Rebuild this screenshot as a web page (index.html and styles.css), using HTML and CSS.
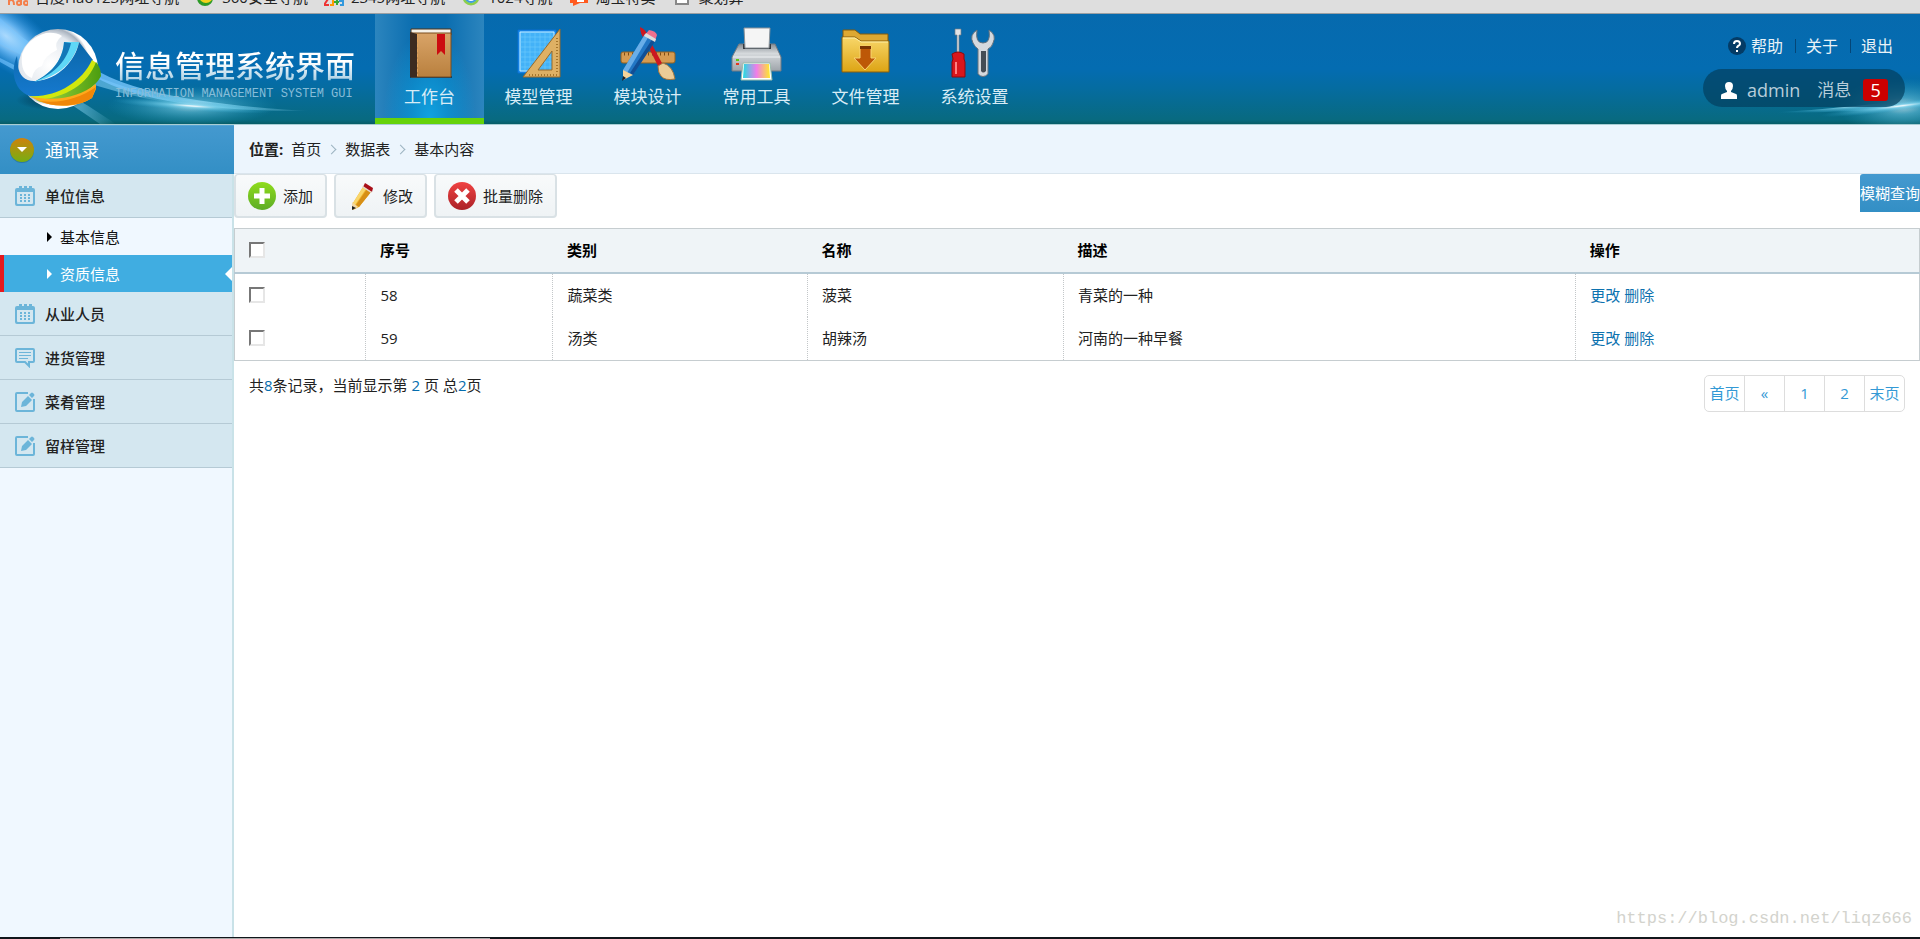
FILE: index.html
```html
<!DOCTYPE html>
<html lang="zh-CN">
<head>
    <meta charset="UTF-8">
    <title>信息管理系统界面</title>
    <link rel="stylesheet" href="styles.css">
</head>
<body>
    <!-- 图标 -->
    <svg class="defs" aria-hidden="true">
        <defs>
            <symbol id="i-date" viewBox="0 0 20 20">
                <path fill="#6cb5d9" fill-rule="evenodd" d="M2 2h2v-2h3v2h2v-2h3v2h2v-2h3v2h1q2 0 2 2v14q0 2-2 2h-16q-2 0-2-2v-14q0-2 2-2zM2 6v11q0 1 1 1h14q1 0 1-1v-11z"/>
                <path fill="#6cb5d9" d="M5 8h2v2h-2zM9 8h2v2h-2zM13 8h2v2h-2zM5 11h2v2h-2zM9 11h2v2h-2zM13 11h2v2h-2zM5 14h2v2h-2zM9 14h2v2h-2zM13 14h2v2h-2z"/>
            </symbol>
            <symbol id="i-chat" viewBox="0 0 20 20">
                <path fill="none" stroke="#6cb5d9" stroke-width="2" d="M2 1h16q1 0 1 1v11q0 1-1 1h-4v4l-4-4h-8q-1 0-1-1v-11q0-1 1-1z"/>
                <path stroke="#6cb5d9" d="M4 4.500h12M4 7.500h12M4 10.500h9"/>
            </symbol>
            <symbol id="i-edit" viewBox="0 0 20 20">
                <path fill="none" stroke="#6cb5d9" stroke-width="2" d="M13 1h-11q-1 0-1 1v16q0 1 1 1h16q1 0 1-1v-11"/>
                <path fill="#6cb5d9" d="M6 15l1-5 6-6 4 4-6 6zM14 3l2-2q1-1 2 0l1 1q1 1 0 2l-2 2z"/>
            </symbol>
        </defs>
    </svg>

    <nav class="bookmarks" aria-label="收藏">
        <a href="#"><svg width="20" height="20"><path d="M1 10v8M1 14q5-3 5 4M9 16a2 2 0 1 0 4 0a2 2 0 1 0-4 0M13 13v5M16 16a2 2 0 1 0 4 0a2 2 0 1 0-4 0" fill="none" stroke="#f47f4a" stroke-width="2"/></svg>百度Hao123网址导航</a>
        <a href="#"><svg width="20" height="20"><circle cx="10" cy="11" r="8" fill="#2c9a27"/><circle cx="11" cy="9" r="7" fill="#f3d21c"/></svg>360安全导航</a>
        <a href="#"><svg width="20" height="20"><path d="M0 12h4l-4 6h5" fill="none" stroke="#e33" stroke-width="2"/><path d="M6 12h3v6h-3" fill="none" stroke="#f90" stroke-width="2"/><path d="M13 10v8M10 15h5" stroke="#3a3" stroke-width="2"/><path d="M20 12h-4v2h3v4h-3" fill="none" stroke="#39d" stroke-width="2"/></svg>2345网址导航</a>
        <a href="#"><svg width="20" height="20"><circle cx="10" cy="10" r="7" fill="#fff" stroke="#8ccf4d" stroke-width="3"/><circle cx="10" cy="10" r="5" fill="none" stroke="#3d9be0" stroke-width="2"/></svg>1024导航</a>
        <a href="#"><svg width="20" height="20"><path d="M1 5h18v11h-8l-7 3v-3h-3z" fill="#ff5a1f"/><path d="M8 14h7" stroke="#fff" stroke-width="2"/></svg>淘宝特卖</a>
        <a href="#"><svg width="20" height="20"><path d="M4 2h12v15h-12z" fill="#fff" stroke="#888" stroke-width="2"/></svg>聚划算</a>
    </nav>

    <header class="header">
        <svg class="glow" viewBox="0 0 375 110" width="375" height="110" aria-hidden="true">
            <defs>
                <radialGradient id="g1"><stop offset="0" stop-color="#fff" stop-opacity=".95"/><stop offset=".4" stop-color="#7cc5ff" stop-opacity=".8"/><stop offset="1" stop-color="#2a93e8" stop-opacity="0"/></radialGradient>
                <radialGradient id="g2"><stop offset="0" stop-color="#fff"/><stop offset=".3" stop-color="#7bd3ee" stop-opacity=".7"/><stop offset="1" stop-color="#27a0c8" stop-opacity="0"/></radialGradient>
                <linearGradient id="g3"><stop offset="0" stop-color="#6fc0ff" stop-opacity=".8"/><stop offset=".6" stop-color="#9be4ff" stop-opacity=".7"/><stop offset="1" stop-color="#9be4ff" stop-opacity="0"/></linearGradient>
            </defs>
            <ellipse cx="6" cy="22" rx="70" ry="30" transform="rotate(38 6 22)" fill="url(#g1)"/>
            <path d="M0 4Q55 60 195 92Q95 82 0 30z" fill="url(#g3)" opacity=".7"/>
            <path d="M0 44Q60 72 116 110H100Q50 75 0 48z" fill="url(#g3)" opacity=".8"/>
            <path d="M90 52Q140 88 310 97Q150 98 90 60z" fill="url(#g3)"/>
            <ellipse cx="192" cy="92" rx="85" ry="20" fill="url(#g2)" opacity=".7"/>
            <ellipse cx="192" cy="92" rx="80" ry="5" transform="rotate(4 192 92)" fill="url(#g2)"/>
        </svg>
        <svg class="glow glow-right" viewBox="0 0 200 110" width="200" height="110" aria-hidden="true">
            <ellipse cx="182" cy="92" rx="66" ry="28" fill="url(#g2)" opacity=".7"/>
            <path d="M20 100Q120 96 200 84V94Q130 98 20 100z" fill="url(#g2)"/>
            <ellipse cx="180" cy="92" rx="80" ry="5" transform="rotate(-7 180 92)" fill="url(#g2)"/>
        </svg>

        <a class="logo" href="#">
            <svg width="115" height="110" viewBox="0 0 115 110" aria-hidden="true">
                <defs>
                    <radialGradient id="ball" cx=".4" cy=".45"><stop offset="0" stop-color="#fff"/><stop offset=".75" stop-color="#e3e8ee"/><stop offset=".92" stop-color="#a9b3bf"/><stop offset="1" stop-color="#fff"/></radialGradient>
                    <linearGradient id="blue" x2="0" y2="1"><stop offset="0" stop-color="#0a67a8"/><stop offset="1" stop-color="#1679cf"/></linearGradient>
                    <linearGradient id="green" x2="1"><stop offset="0" stop-color="#a5d843"/><stop offset="1" stop-color="#4b9d0f"/></linearGradient>
                    <radialGradient id="shade"><stop offset="0" stop-color="#023" stop-opacity=".7"/><stop offset="1" stop-color="#023" stop-opacity="0"/></radialGradient>
                </defs>
                <ellipse cx="52" cy="86" rx="36" ry="10" fill="url(#shade)"/>
                <circle cx="58" cy="55" r="40" fill="url(#ball)"/>
                <path d="M22 40Q28 24 46 19Q56 18 62 22Q54 28 57 36Q44 42 42 52Q34 54 32 64Q20 60 22 40z" fill="#fff"/>
                <path d="M17 42C11 54 12 76 30 82C56 86 82 70 93 46L79 28C76 46 58 66 36 67C26 68 19 62 18 52z" fill="url(#blue)"/>
                <path d="M64 28L79 28C74 48 60 62 34 68C54 58 63 44 64 28z" fill="#5fd8f7"/>
                <path d="M64 28L71 29C67 46 56 59 34 68C54 58 63 44 64 28z" fill="#1378b8"/>
                <path d="M29 82C56 84 82 68 92 46L98 50C92 72 62 88 40 87z" fill="#d1e80d"/>
                <path d="M36 86C66 84 88 70 96 48Q101 54 101 62C92 80 64 90 40 88z" fill="url(#green)"/>
                <path d="M32 83C60 88 80 82 96 70V75L92 84C76 95 48 94 32 83z" fill="#ffa91c"/>
                <path d="M40 87C60 90 80 84 96 73L92 84C78 93 54 94 40 87z" fill="#f08708"/>
            </svg>
            <span class="logo-text">
                <strong>信息管理系统界面</strong>
                <small>INFORMATION MANAGEMENT SYSTEM GUI</small>
            </span>
        </a>

        <nav class="nav" aria-label="主导航">
            <a class="selected" href="#">
                <svg viewBox="0 0 56 56"><defs><linearGradient id="bk" x2="0" y2="1"><stop offset="0" stop-color="#d9a468"/><stop offset="1" stop-color="#b9803e"/></linearGradient></defs><path d="M8 50h42v2h-42z" fill="#053f6c"/><path d="M9 3h40v6h-40z" fill="#f5f1e8" stroke="#4e3218"/><path d="M9 7h40v44h-40z" fill="url(#bk)" stroke="#7b4d1e"/><path d="M8 6l7 2v43h-7z" fill="#3c2b20"/><path d="M15.500 8v42" stroke="#e2a35a" stroke-dasharray="3 2"/><path d="M35 8h8v21l-4-4-4 4z" fill="#cc0c10"/></svg>
                工作台
            </a>
            <a href="#">
                <svg viewBox="0 0 56 56"><path d="M7 4h38v43h-38z" fill="#1e93f5" stroke="#0b6fd0"/><path d="M9 6h34v39h-34z" fill="#43b2f8" stroke="#c9ecff"/><path d="M14 6v39M19 6v39M24 6v39M29 6v39M34 6v39M39 6v39M9 11h34M9 16h34M9 21h34M9 26h34M9 31h34M9 36h34M9 41h34" stroke="#77cdfc" stroke-width=".5"/><path fill-rule="evenodd" d="M12 51L49 3V51zM27 44H41V25z" fill="#deb064" stroke="#9a6a28"/><path d="M46 12v36M18 49h28" stroke="#a5762d" stroke-width="2" stroke-dasharray="1 2"/></svg>
                模型管理
            </a>
            <a href="#">
                <svg viewBox="0 0 56 56"><rect x="1" y="26" width="54" height="11" rx="2" fill="#d69b51" stroke="#93601f"/><path d="M4 28h48" stroke="#7c4d15" stroke-width="3" stroke-dasharray="1 3"/><path d="M20 1q7 3 8 10l15 28-4 3-14-28q-5-6-5-13z" fill="#cc1820"/><path d="M38 40l5-3q10 3 12 16-10 2-14-3-3-3-3-10z" fill="#ebcc97" stroke="#a4753c"/><path d="M25 8l10 6-22 35-9 5-1-10z" fill="#2277c5"/><path d="M25 8l4 2-22 37-4-3z" fill="#69aee8"/><path d="M33 12l3 2-23 35-3-2z" fill="#114f95"/><path d="M3 44l10 5-10 5z" fill="#f3d49a"/><path d="M3 50l3 2-4 3z" fill="#222"/><path d="M25 9l10 6 2-6q-1-4-8-5z" fill="#f1708e"/><path d="M24 10l11 6 1-3-10-6z" fill="#ddd"/></svg>
                模块设计
            </a>
            <a href="#">
                <svg viewBox="0 0 56 56"><defs><linearGradient id="pr" x2="0" y2="1"><stop offset="0" stop-color="#868d93"/><stop offset=".35" stop-color="#d5d9dc"/><stop offset="1" stop-color="#9ea4aa"/></linearGradient><linearGradient id="rain"><stop offset="0" stop-color="#25dce0"/><stop offset=".5" stop-color="#ef7de9"/><stop offset="1" stop-color="#ffe929"/></linearGradient></defs><path d="M10 18h36l6 13v14h-49v-14z" fill="url(#pr)" stroke="#737b83"/><path d="M14 18h28v5h-28z" fill="#343a40"/><path d="M15 2h26l-1 20h-24z" fill="#f5f5f5" stroke="#8c9399"/><path d="M4 31h47" stroke="#eef1f3"/><path d="M7 33h3v2h-3z" fill="#5fc915"/><path d="M7 37h3v2h-3z" fill="#e4371e"/><path d="M14 37h27l2 17h-31z" fill="#fff" stroke="#9ba"/><path d="M15 38h25l1 14h-27z" fill="url(#rain)"/></svg>
                常用工具
            </a>
            <a href="#">
                <svg viewBox="0 0 56 56"><defs><linearGradient id="fo" x2="0" y2="1"><stop offset="0" stop-color="#f8d76a"/><stop offset="1" stop-color="#dda414"/></linearGradient></defs><path d="M5 4h12l5 4h28v12h-45z" fill="#dda832" stroke="#815a0c"/><path d="M4 11h13l6 4h28v31h-47z" fill="url(#fo)" stroke="#8a5f0c"/><path d="M5 12h12l6 4h27" fill="none" stroke="#fff0a5"/><path d="M22 20h11v12h5l-11 12-11-12h6z" fill="#bd5807" stroke="#f9d372"/><path d="M22 20h11v3h-11z" fill="#7a3503"/></svg>
                文件管理
            </a>
            <a href="#">
                <svg viewBox="0 0 56 56"><path d="M8 3h6v6h-2v18h-2v-18h-2z" fill="#e0e3e6" stroke="#737d85" stroke-width=".7"/><path d="M5 28q6-4 12 0v5l1 3v15h-13v-15l1-3z" fill="#d9161c" stroke="#8e090c"/><path d="M9 36v12" stroke="#ff8080" stroke-width="2"/><path d="M30 4q-8 5-4 13 2 4 5 6v25q5 5 10 0v-25q4-2 5-6 4-8-4-13 2 13-6 13t-6-13z" fill="#d5d9de" stroke="#66727d"/><path d="M34 25h5v20q-3 3-5 0z" fill="#454d55"/></svg>
                系统设置
            </a>
        </nav>

        <div class="top-right">
            <ul class="links">
                <li><svg width="18" height="18" viewBox="0 0 18 18"><circle cx="9" cy="9" r="9" fill="#043b65"/><path d="M6 7q0-3 3-3t3 3q0 1-2 2-1 1-1 2M9 13v2" fill="none" stroke="#fff" stroke-width="2"/></svg><a href="#">帮助</a></li>
                <li><a href="#">关于</a></li>
                <li><a href="#">退出</a></li>
            </ul>
            <div class="user">
                <svg width="16" height="17" viewBox="0 0 16 17"><path d="M8 0q4 0 4 4 0 3-2 5v1l5 2q1 0 1 2v3h-16v-3q0-2 1-2l5-2v-1q-2-2-2-5 0-4 4-4z" fill="#fff"/></svg>
                <span>admin</span>
                <a href="#">消息</a>
                <b>5</b>
            </div>
        </div>
    </header>

    <div class="main">
        <aside class="sidebar">
            <h2 class="left-top">
                <svg width="26" height="26" viewBox="0 0 26 26"><defs><linearGradient id="og" x2="0" y2="1"><stop offset="0" stop-color="#cf820d"/><stop offset="1" stop-color="#76af12"/></linearGradient></defs><circle cx="13" cy="14" r="12" fill="#2a78aa"/><circle cx="13" cy="13" r="12" fill="url(#og)"/><path d="M8 10h10l-5 5z" fill="#fff"/></svg>
                通讯录
            </h2>
            <ul class="menu">
                <li>
                    <a class="title" href="#"><svg><use href="#i-date"/></svg>单位信息</a>
                    <ul class="sub">
                        <li><a href="#">基本信息</a></li>
                        <li class="active"><a href="#">资质信息</a></li>
                    </ul>
                </li>
                <li><a class="title" href="#"><svg><use href="#i-date"/></svg>从业人员</a></li>
                <li><a class="title" href="#"><svg><use href="#i-chat"/></svg>进货管理</a></li>
                <li><a class="title" href="#"><svg><use href="#i-edit"/></svg>菜肴管理</a></li>
                <li><a class="title" href="#"><svg><use href="#i-edit"/></svg>留样管理</a></li>
            </ul>
        </aside>

        <main class="content">
            <div class="place">
                <b>位置:</b>
                <ul>
                    <li><a href="#">首页</a></li>
                    <li><a href="#">数据表</a></li>
                    <li><a href="#">基本内容</a></li>
                </ul>
            </div>

            <div class="tools">
                <button type="button"><svg viewBox="0 0 28 28"><defs><linearGradient id="ad" x2="0" y2="1"><stop offset="0" stop-color="#8fdc1c"/><stop offset="1" stop-color="#5dac26"/></linearGradient></defs><circle cx="14" cy="14" r="14" fill="url(#ad)"/><path d="M14 6v16M6 14h16" stroke="#fff" stroke-width="5"/></svg>添加</button>
                <button type="button"><svg viewBox="0 0 28 28"><path d="M15 5l8 5-12 15-6 3v-7z" fill="#f0b42c"/><path d="M19 7l4 3-12 15-3-2z" fill="#d78f16"/><path d="M15 5l3 2-11 16-2-2z" fill="#f9d66c"/><path d="M4 20l6 5-6 3z" fill="#f1d8a8"/><path d="M4 24l4 2-4 2z" fill="#222"/><path d="M17 1l8 5-1 4-9-5z" fill="#a90f18"/><path d="M15 4l9 6-1 1-9-6z" fill="#e3d8cc"/></svg>修改</button>
                <button type="button"><svg viewBox="0 0 28 28"><defs><linearGradient id="de" x2="0" y2="1"><stop offset="0" stop-color="#f04242"/><stop offset="1" stop-color="#ab2228"/></linearGradient></defs><circle cx="14" cy="14" r="14" fill="url(#de)"/><path d="M8 8l12 12M20 8L8 20" stroke="#fff" stroke-width="5"/></svg>批量删除</button>
                <button type="button" class="query">模糊查询</button>
            </div>

            <table class="table">
                <colgroup>
                    <col class="c-check"><col class="c-no"><col class="c-type"><col class="c-name"><col class="c-desc"><col>
                </colgroup>
                <thead>
                    <tr>
                        <th><input type="checkbox" aria-label="全选"></th>
                        <th>序号</th>
                        <th>类别</th>
                        <th>名称</th>
                        <th>描述</th>
                        <th>操作</th>
                    </tr>
                </thead>
                <tbody>
                    <tr>
                        <td><input type="checkbox" aria-label="选择58"></td>
                        <td>58</td>
                        <td>蔬菜类</td>
                        <td>菠菜</td>
                        <td>青菜的一种</td>
                        <td><a href="#">更改</a> <a href="#">删除</a></td>
                    </tr>
                    <tr>
                        <td><input type="checkbox" aria-label="选择59"></td>
                        <td>59</td>
                        <td>汤类</td>
                        <td>胡辣汤</td>
                        <td>河南的一种早餐</td>
                        <td><a href="#">更改</a> <a href="#">删除</a></td>
                    </tr>
                </tbody>
            </table>

            <div class="page">
                <p>共<i>8</i>条记录，当前显示第 <i>2</i> 页 总<i>2</i>页</p>
                <ul>
                    <li><a href="#">首页</a></li>
                    <li><a href="#">«</a></li>
                    <li><a href="#">1</a></li>
                    <li><a href="#">2</a></li>
                    <li><a href="#">末页</a></li>
                </ul>
            </div>
        </main>
    </div>

    <footer class="taskbar"></footer>
    <div class="watermark">https://blog.csdn.net/liqz666</div>
</body>
</html>
```

FILE: styles.css
```css
*{
    box-sizing: border-box;
    margin: 0;
    padding: 0;
}
body{
    position: relative;
    display: flex;
    flex-direction: column;
    min-height: 100vh;
    background: #fff;
    color: #222;
    font: 15px/20px "Open Sans","Noto Sans CJK SC",sans-serif;
}
ul{
    list-style: none;
}
a{
    color: inherit;
    text-decoration: none;
}
i{
    font-style: normal;
}
button{
    font: inherit;
    color: inherit;
    cursor: pointer;
}
.defs{
    position: absolute;
    width: 0;
    height: 0;
}

/* 收藏栏 */
.bookmarks{
    display: flex;
    gap: 16px;
    height: 14px;
    padding-left: 8px;
    overflow: hidden;
    background: #dedede;
    border-bottom: 1px solid #9a9fa3;
}
.bookmarks a{
    display: flex;
    gap: 7px;
    height: 20px;
    margin-top: -13px;
    white-space: nowrap;
}

/* 头部 */
.header{
    position: relative;
    display: flex;
    height: 111px;
    background: linear-gradient(#066aae,#046cb1 50%,#056ca0 68%,#086a80 96%,#075c66);
    border-bottom: 1px solid #a9cdd3;
}
.glow{
    position: absolute;
    left: 0;
    top: 0;
}
.glow-right{
    left: auto;
    right: 0;
}
.logo{
    position: relative;
    display: flex;
    width: 375px;
    flex: none;
}
.logo-text{
    display: flex;
    flex-direction: column;
    padding-top: 31px;
    white-space: nowrap;
}
.logo-text strong{
    font-size: 30px;
    line-height: 42px;
    font-weight: 500;
    background: linear-gradient(#fff 40%,#a9cfe4 85%);
    -webkit-background-clip: text;
    background-clip: text;
    color: transparent;
}
.logo-text small{
    padding-top: 1px;
    font: 12px/12px "Liberation Mono",monospace;
    color: #86bcd8;
}
.nav{
    display: flex;
}
.nav a{
    display: flex;
    flex-direction: column;
    align-items: center;
    width: 109px;
    padding-top: 12px;
    color: #d8ecf6;
    font-size: 17px;
    line-height: 30px;
}
.nav svg{
    width: 56px;
    height: 56px;
}
.nav .selected{
    background: radial-gradient(ellipse at 50% 100%,#10a2e0 0,rgba(16,162,224,0) 60%),linear-gradient(90deg,#2c85be,#0b6eb0 35%,#0b6eb0 65%,#2c85be);
    border-bottom: 6px solid #66d20a;
}
.top-right{
    position: relative;
    display: flex;
    flex-direction: column;
    align-items: flex-end;
    gap: 13px;
    margin-left: auto;
    padding: 22px 15px 0 0;
}
.links{
    display: flex;
    color: #e9f2f7;
    font-size: 16px;
}
.links li{
    display: flex;
    align-items: center;
    gap: 5px;
    padding: 0 12px 0 11px;
}
.links li + li{
    background: linear-gradient(rgba(4,45,80,.6),rgba(4,45,80,.6)) left center/1px 14px no-repeat;
}
.user{
    display: flex;
    align-items: center;
    width: 202px;
    height: 38px;
    padding: 4px 0 0 18px;
    border-radius: 19px;
    background: rgba(3,62,94,.7);
    color: #b8ceda;
    font-size: 18px;
}
.user span{
    margin: 0 17px 0 10px;
}
.user a{
    font-size: 17px;
}
.user b{
    width: 25px;
    margin-left: 12px;
    border-radius: 3px;
    background: #c00;
    color: #fff;
    font-weight: 400;
    line-height: 22px;
    text-align: center;
}

/* 左侧 */
.main{
    display: flex;
    flex: 1;
}
.sidebar{
    width: 234px;
    flex: none;
    background: #f0f8ff;
    border-right: 2px solid #c9e2e8;
}
.left-top{
    display: flex;
    align-items: center;
    gap: 10px;
    height: 49px;
    margin-right: -2px;
    padding-left: 9px;
    border-top: 1px solid #56a5d4;
    background: linear-gradient(#4499cf,#338fc5);
    color: #fff;
    font-size: 18px;
    font-weight: 400;
}
.title{
    display: flex;
    align-items: center;
    gap: 10px;
    height: 44px;
    padding-left: 15px;
    background: #d4e7f0;
    border-bottom: 1px solid #b5cad5;
    font-weight: 500;
}
.title svg{
    width: 20px;
    height: 20px;
}
.sub li a{
    display: flex;
    align-items: center;
    gap: 8px;
    height: 37px;
    padding-left: 47px;
    color: #111;
}
.sub li a::before{
    content: "";
    border: 5px solid transparent;
    border-left-color: #000;
    border-right: 0;
}
.sub .active a{
    padding-left: 43px;
    border-left: 4px solid #e5191d;
    background: #40ade1;
    color: #fff;
}
.sub .active a::before{
    border-left-color: #fff;
}
.sub .active a::after{
    content: "";
    margin-left: auto;
    border: 7px solid transparent;
    border-right-color: #fff;
    border-left: 0;
}

/* 右侧 */
.content{
    flex: 1;
    min-width: 0;
}
.place{
    display: flex;
    align-items: center;
    gap: 8px;
    height: 49px;
    padding-left: 15px;
    background: #ecf5fd;
    border-bottom: 1px solid #dae5ed;
}
.place ul{
    display: flex;
}
.place li + li::before{
    content: "";
    display: inline-block;
    width: 6px;
    height: 6px;
    margin: 0 10px 2px 7px;
    border: solid #9cb3c1;
    border-width: 1px 1px 0 0;
    transform: rotate(45deg);
}
.tools{
    display: flex;
    gap: 7px;
    margin-bottom: 10px;
}
.tools button{
    display: flex;
    align-items: center;
    gap: 7px;
    height: 44px;
    padding: 0 12px;
    border: 2px solid #d9e1e5;
    border-top-width: 1px;
    border-radius: 4px;
    background: linear-gradient(#f8fafb,#eff3f5);
}
.tools svg{
    width: 28px;
    height: 28px;
}
.tools .query{
    height: 38px;
    margin-left: auto;
    padding: 0;
    border: 0;
    border-radius: 3px 0 0 0;
    background: linear-gradient(#4499cf,#338fc5);
    color: #fff;
}
.table{
    width: 100%;
    table-layout: fixed;
    border-collapse: collapse;
    border: 1px solid #c6cdd0;
}
.c-check{
    width: 7.8%;
}
.c-no{
    width: 11.1%;
}
.c-type{
    width: 15.1%;
}
.c-name{
    width: 15.2%;
}
.c-desc{
    width: 30.4%;
}
.table th{
    height: 44px;
    padding-left: 14px;
    background: #eff4f7;
    border-bottom: 2px solid #b6cad5;
    color: #000;
    text-align: left;
}
.table td{
    height: 44px;
    padding-left: 14px;
    border-right: 1px dotted #c3c7c9;
}
.table td a{
    color: #0d72af;
}
.table input{
    appearance: none;
    display: block;
    width: 16px;
    height: 16px;
    border: 2px solid;
    border-color: #777 #e6e6e6 #e6e6e6 #777;
    background: #fff;
}
.page{
    display: flex;
    justify-content: space-between;
    padding: 14px 15px 0 15px;
}
.page i{
    color: #056dae;
}
.page ul{
    display: flex;
    border: 1px solid #ddd;
    border-radius: 5px;
}
.page li + li{
    border-left: 1px solid #ddd;
}
.page li a{
    display: block;
    width: 39px;
    color: #3399d5;
    line-height: 35px;
    text-align: center;
    white-space: nowrap;
}

/* 底部 */
.taskbar{
    height: 2px;
    background: linear-gradient(#aaa,#aaa) 60px 1px/430px 1px no-repeat #11161b;
}
.watermark{
    position: absolute;
    right: 8px;
    bottom: 8px;
    color: #d3d3cd;
    font: 17px/24px "Liberation Mono",monospace;
}
```
